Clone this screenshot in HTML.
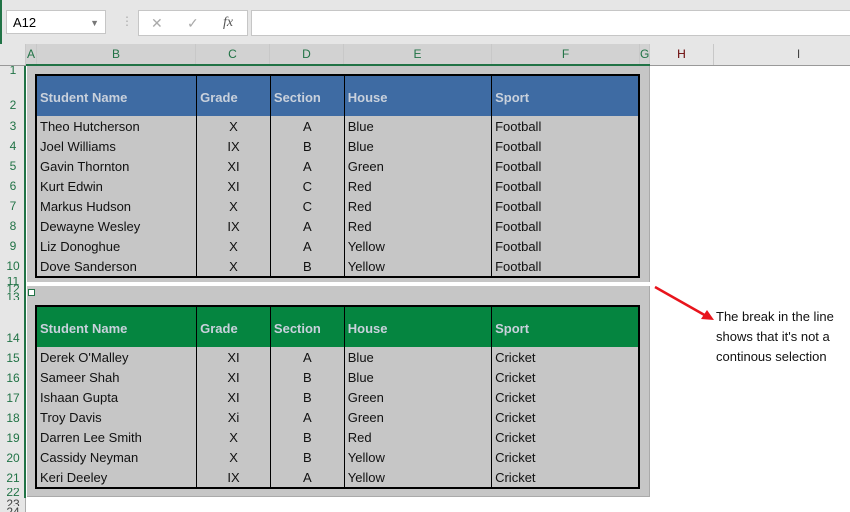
<!DOCTYPE html>
<html><head><style>
body{margin:0;width:850px;height:512px;overflow:hidden;background:#fff;font-family:"Liberation Sans",sans-serif;position:relative}
.a{position:absolute}
.top{left:0;top:0;width:850px;height:44px;background:#e6e6e6}
.box{background:#fff;border:1px solid #c6c6c6}
.ch{top:44px;height:21px;background:#e6e6e6;border-bottom:1px solid #999;font-size:12px;line-height:21px;text-align:center;color:#444}
.ch div{position:absolute;top:0;height:21px;border-right:1px solid #c8c8c8;box-sizing:border-box}
.rh{left:0;width:26px;background:#e6e6e6;font-size:12px;color:#217346;text-align:center;box-sizing:border-box}
table{position:absolute;border-collapse:collapse;border:2px solid #000;font-size:13px;color:#111}
td{border-left:1px solid #000;border-right:1px solid #000;padding:0 0 0 3px;height:20px;line-height:18px;vertical-align:bottom;white-space:nowrap}
tr.h td{height:40px;font-weight:bold;color:#c9d1dc;vertical-align:bottom;line-height:36px}
td.c{text-align:center;padding:0}
</style></head><body>
<div class="a top"></div>
<div class="a box" style="left:6px;top:10px;width:100px;height:24px;font-size:13px;line-height:24px;padding-left:6px;box-sizing:border-box">A12<span style="position:absolute;right:6px;top:0;color:#777;font-size:9px">▼</span></div>
<div class="a" style="left:121px;top:14px;color:#aaa;font-size:12px">⋮</div>
<div class="a box" style="left:138px;top:10px;width:108px;height:24px;color:#aaa;font-size:14px;line-height:24px"><span class="a" style="left:12px">✕</span><span class="a" style="left:48px">✓</span><span class="a" style="left:84px;color:#555;font-style:italic;font-family:'Liberation Serif',serif">fx</span></div>
<div class="a box" style="left:251px;top:10px;width:610px;height:24px"></div>
<div class="a" style="left:0;top:0;width:2px;height:44px;background:#217346"></div>
<div class="a ch" style="left:0;width:850px">
<div style="left:0;width:26px"></div>
<div style="left:26px;width:11px;background:#d2d2d2;color:#217346">A</div>
<div style="left:37px;width:159px;background:#d2d2d2;color:#217346">B</div>
<div style="left:196px;width:74px;background:#d2d2d2;color:#217346">C</div>
<div style="left:270px;width:74px;background:#d2d2d2;color:#217346">D</div>
<div style="left:344px;width:148px;background:#d2d2d2;color:#217346">E</div>
<div style="left:492px;width:148px;background:#d2d2d2;color:#217346">F</div>
<div style="left:640px;width:10px;background:#d2d2d2;color:#217346">G</div>
<div style="left:650px;width:64px;color:#600">H</div>
<div style="left:714px;width:170px">I</div>
</div>
<div class="a" style="left:26px;top:64px;width:624px;height:2px;background:#217346"></div>
<div class="a rh" style="top:66px;height:446px;border-right:1px solid #ababab"></div>
<div class="a" style="left:24px;top:66px;width:2px;height:432px;background:#217346"></div>
<div class="a" style="left:27px;top:66px;width:622px;height:216px;background:#c6c6c6;border-right:1px solid #aaa"></div>
<div class="a" style="left:27px;top:286px;width:622px;height:210px;background:#c6c6c6;border-right:1px solid #aaa;border-bottom:1px solid #aaa"></div>
<div class="a" style="left:28px;top:289px;width:5px;height:5px;border:1px solid #217346;background:#fff"></div>
<div class="a" style="left:0;top:66px;width:26px;font-size:12px;color:#217346;text-align:center">
<div class="a" style="top:0;width:26px;height:8px;line-height:8px;overflow:hidden">1</div>
<div class="a" style="top:32px;width:26px">2</div>
<div class="a" style="top:53px;width:26px">3</div><div class="a" style="top:73px;width:26px">4</div><div class="a" style="top:93px;width:26px">5</div><div class="a" style="top:113px;width:26px">6</div><div class="a" style="top:133px;width:26px">7</div><div class="a" style="top:153px;width:26px">8</div><div class="a" style="top:173px;width:26px">9</div><div class="a" style="top:193px;width:26px">10</div>
<div class="a" style="top:211px;width:26px;height:8px;line-height:8px;overflow:hidden">11</div>
<div class="a" style="top:218px;width:26px;height:8px;line-height:10px;overflow:hidden">12</div>
<div class="a" style="top:226px;width:26px;height:8px;line-height:10px;overflow:hidden">13</div>
<div class="a" style="top:265px;width:26px">14</div>
<div class="a" style="top:285px;width:26px">15</div><div class="a" style="top:305px;width:26px">16</div><div class="a" style="top:325px;width:26px">17</div><div class="a" style="top:345px;width:26px">18</div><div class="a" style="top:365px;width:26px">19</div><div class="a" style="top:385px;width:26px">20</div><div class="a" style="top:405px;width:26px">21</div>
<div class="a" style="top:422px;width:26px;height:9px;line-height:8px;overflow:hidden">22</div>
<div class="a" style="top:432px;width:26px;height:8px;line-height:12px;overflow:hidden;color:#444">23</div>
<div class="a" style="top:440px;width:26px;height:6px;line-height:12px;overflow:hidden;color:#444">24</div>
</div>
<table style="left:35px;top:74px;width:605px">
<colgroup><col style="width:161px"><col style="width:74px"><col style="width:74px"><col style="width:148px"><col style="width:148px"></colgroup>
<tr class="h" style="background:#3e6ba3"><td>Student Name</td><td>Grade</td><td>Section</td><td>House</td><td>Sport</td></tr>
<tr><td>Theo Hutcherson</td><td class="c">X</td><td class="c">A</td><td>Blue</td><td>Football</td></tr>
<tr><td>Joel Williams</td><td class="c">IX</td><td class="c">B</td><td>Blue</td><td>Football</td></tr>
<tr><td>Gavin Thornton</td><td class="c">XI</td><td class="c">A</td><td>Green</td><td>Football</td></tr>
<tr><td>Kurt Edwin</td><td class="c">XI</td><td class="c">C</td><td>Red</td><td>Football</td></tr>
<tr><td>Markus Hudson</td><td class="c">X</td><td class="c">C</td><td>Red</td><td>Football</td></tr>
<tr><td>Dewayne Wesley</td><td class="c">IX</td><td class="c">A</td><td>Red</td><td>Football</td></tr>
<tr><td>Liz Donoghue</td><td class="c">X</td><td class="c">A</td><td>Yellow</td><td>Football</td></tr>
<tr><td>Dove Sanderson</td><td class="c">X</td><td class="c">B</td><td>Yellow</td><td>Football</td></tr>
</table>
<table style="left:35px;top:305px;width:605px">
<colgroup><col style="width:161px"><col style="width:74px"><col style="width:74px"><col style="width:148px"><col style="width:148px"></colgroup>
<tr class="h" style="background:#058540"><td>Student Name</td><td>Grade</td><td>Section</td><td>House</td><td>Sport</td></tr>
<tr><td>Derek O'Malley</td><td class="c">XI</td><td class="c">A</td><td>Blue</td><td>Cricket</td></tr>
<tr><td>Sameer Shah</td><td class="c">XI</td><td class="c">B</td><td>Blue</td><td>Cricket</td></tr>
<tr><td>Ishaan Gupta</td><td class="c">XI</td><td class="c">B</td><td>Green</td><td>Cricket</td></tr>
<tr><td>Troy Davis</td><td class="c">Xi</td><td class="c">A</td><td>Green</td><td>Cricket</td></tr>
<tr><td>Darren Lee Smith</td><td class="c">X</td><td class="c">B</td><td>Red</td><td>Cricket</td></tr>
<tr><td>Cassidy Neyman</td><td class="c">X</td><td class="c">B</td><td>Yellow</td><td>Cricket</td></tr>
<tr><td>Keri Deeley</td><td class="c">IX</td><td class="c">A</td><td>Yellow</td><td>Cricket</td></tr>
</table>
<svg class="a" style="left:650px;top:280px" width="70" height="50"><line x1="5" y1="7" x2="58" y2="37" stroke="#e8141c" stroke-width="2.5"/><polygon points="64,40 51,39 57,30" fill="#e8141c"/></svg>
<div class="a" style="left:716px;top:307px;font-size:13px;line-height:20px;color:#111">The break in the line<br>shows that it's not a<br>continous selection</div>
</body></html>
